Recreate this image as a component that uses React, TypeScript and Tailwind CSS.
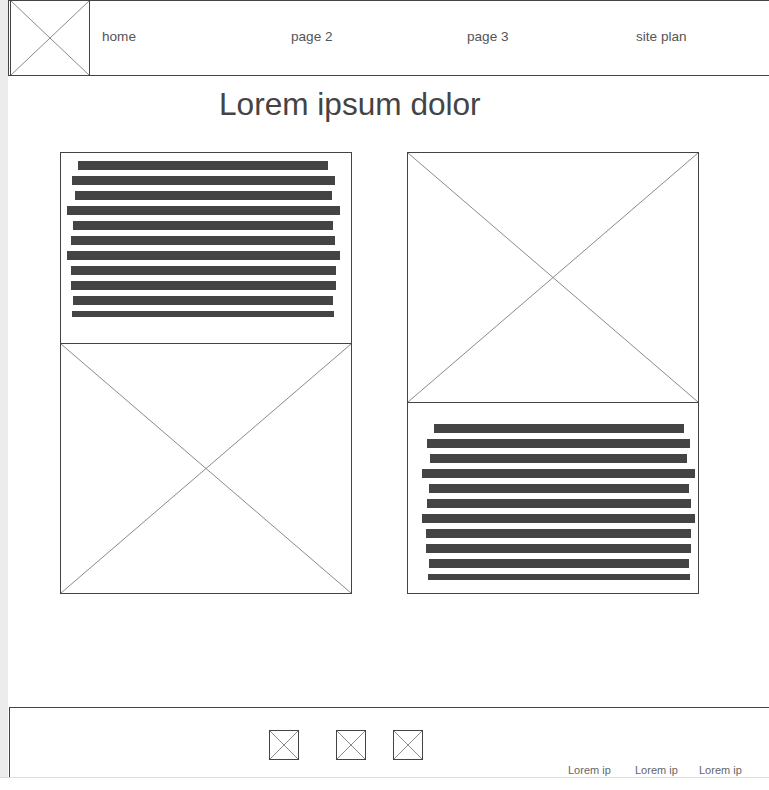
const leftBars: [number, number, number][] = [
  [17, 250, 9],
  [11, 263, 9],
  [14, 257, 9],
  [6, 273, 9],
  [12, 260, 9],
  [10, 264, 9],
  [6, 273, 9],
  [10, 265, 9],
  [10, 265, 9],
  [12, 260, 9],
  [11, 262, 6],
];

const rightBars: [number, number, number][] = [
  [26, 250, 9],
  [19, 263, 9],
  [22, 257, 9],
  [14, 273, 9],
  [21, 260, 9],
  [19, 264, 9],
  [14, 273, 9],
  [18, 265, 9],
  [18, 265, 9],
  [21, 260, 9],
  [20, 262, 6],
];

// crossed box = image placeholder
function Cross() {
  return (
    <svg className="absolute inset-0 w-full h-full" preserveAspectRatio="none" viewBox="0 0 100 100">
      <line x1="0" y1="0" x2="100" y2="100" stroke="#8a8a8a" strokeWidth="1" vectorEffect="non-scaling-stroke" />
      <line x1="100" y1="0" x2="0" y2="100" stroke="#8a8a8a" strokeWidth="1" vectorEffect="non-scaling-stroke" />
    </svg>
  );
}

function Bars({ bars }: { bars: [number, number, number][] }) {
  return (
    <div className="flex flex-col gap-[6px]">
      {bars.map(([l, w, h], i) => (
        <div key={i} className="bg-[#444444]" style={{ marginLeft: l, width: w, height: h }} />
      ))}
    </div>
  );
}

function IconBox() {
  return (
    <div className="relative w-[30px] h-[30px] border border-[#444444]">
      <Cross />
    </div>
  );
}

export default function App() {
  const nav = [
    { label: 'home', w: 'w-[189px]' },
    { label: 'page 2', w: 'w-[176px]' },
    { label: 'page 3', w: 'w-[169px]' },
    { label: 'site plan', w: 'w-[120px]' },
  ];

  return (
    <div className="w-[769px] h-[790px] bg-white overflow-hidden font-['Liberation_Sans',Arial,sans-serif]">
      <div className="flex h-[777px]">
        <div className="w-[8px] bg-[#ececec] shrink-0" />
        <div className="flex-1 min-w-0 flex flex-col">
          {/* header */}
          <header className="h-[76px] border-t border-b border-l border-[#444444] flex items-stretch shrink-0">
            <div className="relative ml-[1px] w-[80px] border-l border-r border-[#444444]">
              <Cross />
            </div>
            <nav className="flex items-center pl-[12px] pb-[2px]">
              {nav.map((n) => (
                <div key={n.label} className={`${n.w} text-[13.6px] leading-[20px] text-[#555555]`}>
                  {n.label}
                </div>
              ))}
            </nav>
          </header>

          <h1 className="mt-[8px] h-[40px] pl-[211px] text-[31.6px] leading-[40px] text-[#444444]">
            Lorem ipsum dolor
          </h1>

          {/* cards */}
          <div className="mt-[28px] flex pl-[52px] gap-[55px]">
            <div className="w-[292px] border border-[#444444] flex flex-col">
              <div className="h-[190px] pt-[8px]">
                <Bars bars={leftBars} />
              </div>
              <div className="relative h-[250px] border-t border-[#444444]">
                <Cross />
              </div>
            </div>
            <div className="w-[292px] border border-[#444444] flex flex-col">
              <div className="relative h-[249px]">
                <Cross />
              </div>
              <div className="h-[191px] pt-[21px] border-t border-[#444444]">
                <Bars bars={rightBars} />
              </div>
            </div>
          </div>

          {/* footer */}
          <footer className="mt-auto ml-[1px] h-[70px] border-t border-l border-[#444444] flex">
            <div className="flex pl-[259px] pt-[22px] items-start">
              <IconBox />
              <div className="ml-[37px]">
                <IconBox />
              </div>
              <div className="ml-[27px]">
                <IconBox />
              </div>
            </div>
            <div className="ml-[145px] self-end flex text-[11px] leading-[14px] text-[#666666]">
              <span className="w-[67px]">Lorem ip</span>
              <span className="w-[64px]">Lorem ip</span>
              <span>Lorem ip</span>
            </div>
          </footer>
        </div>
      </div>
      <div className="h-px bg-[#dcdcdc]" />
    </div>
  );
}
